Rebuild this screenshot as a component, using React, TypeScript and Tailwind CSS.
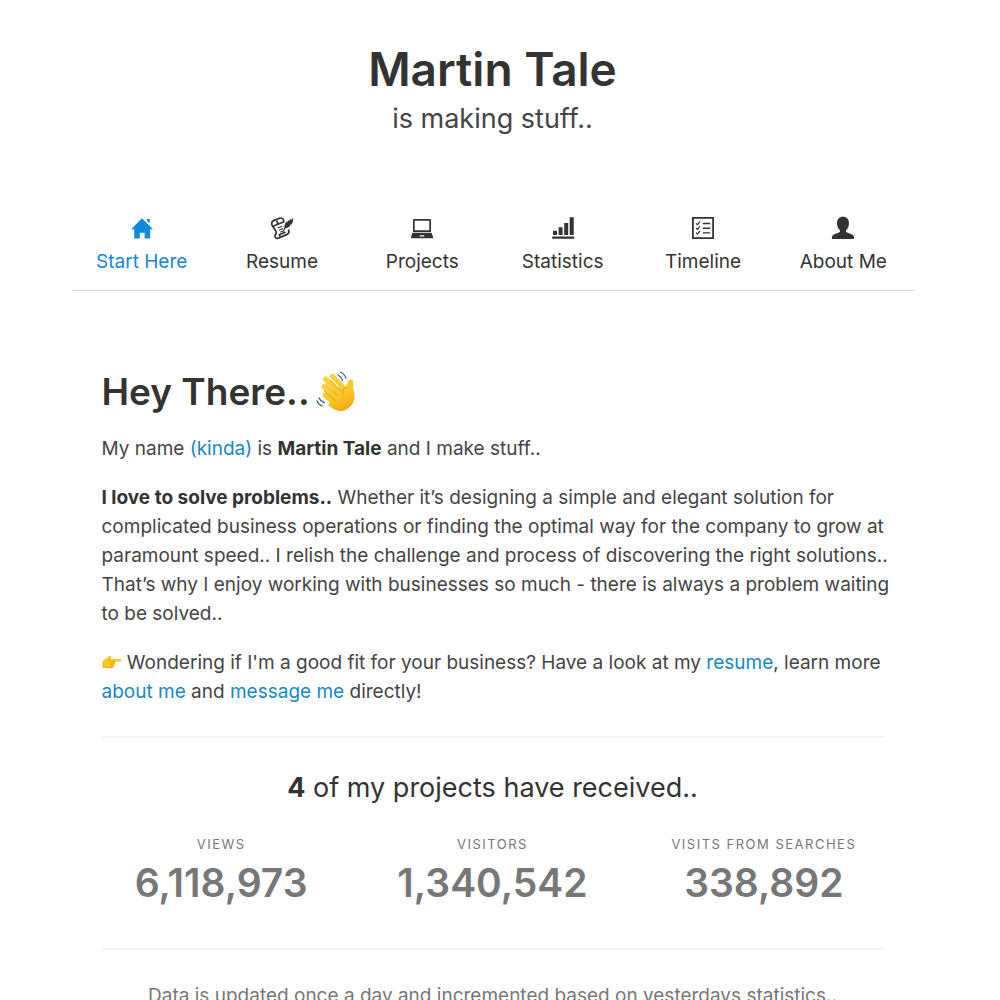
import React from "react";

const HomeIcon = () => (
  <svg viewBox="0 0 24 24" className="h-6 w-6 text-[#0f8ae0]" fill="currentColor" aria-hidden="true">
    <path d="M12 2.200 1.200 13.200h3v9.300h5.600v-5.800h4.800v5.800h5.600v-9.300h2.800z" />
    <path d="M17 3.100h2.700v4.200L17 5z" />
  </svg>
);

const ResumeIcon = () => (
  <svg
    viewBox="0 0 24 24"
    className="h-6 w-6"
    fill="none"
    stroke="currentColor"
    strokeWidth="1.700"
    strokeLinecap="round"
    strokeLinejoin="round"
    aria-hidden="true"
  >
    <path d="M13.800 5.800c0-2.800-1.900-4.400-4.300-3.600L3.900 4.400C1.500 5.400 1.100 7.700 2.400 9.800l3.400 5.200c.9 1.600.4 2.600-.4 3.700" />
    <path d="M2.800 10.300 6.600 8.800c1.300-.6 1.300-2.500.2-3.700M6.600 8.800l6.200-2.500" />
    <path d="M5.400 18.700c-1.300 2 .5 4.300 2.900 3.500l8.700-3.800c1.800-.9 2.400-2.400 1.600-4.300M8.900 22c1.300-.8 1.300-2.100.4-3.300l5.700-2.400" />
    <path d="m8 11.800 3.500-1.400M9.400 14.100l3.200-1.300M10.700 16.100l3.300-1.300" strokeWidth="1.100" />
    <path d="m13.500 14.200 2.300-3.300" strokeWidth="1.100" />
    <path
      d="M14.500 12.300c-.3-3 .6-5.200 2.300-6.800l.5 1 .8-2.200 1 .7 1.200-2.100.8.8 2.300-2-.6 3.100.4.700-1.300 1.500.3 1-2 .7.200 1.100c-1.400 1.500-3.200 2.400-5.900 2.500z"
      fill="currentColor"
      stroke="none"
    />
  </svg>
);

const LaptopIcon = () => (
  <svg viewBox="0 0 24 24" className="h-6 w-6" fill="currentColor" aria-hidden="true">
    <path
      fillRule="evenodd"
      d="M4 3h16a1 1 0 0 1 1 1v12H3V4a1 1 0 0 1 1-1zm.7 1.700v9.600h14.600V4.700z"
    />
    <path fillRule="evenodd" d="M2.500 16.700h19l1.500 4v1.500H1v-1.500zm7.500 2.600-.5 1.200h5l-.5-1.200z" />
  </svg>
);

const StatisticsIcon = () => (
  <svg viewBox="0 0 24 24" className="h-6 w-6" fill="currentColor" aria-hidden="true">
    <path d="M2 14.800h4v4.200H2zM7.600 11.300h4V19h-4zM13.200 7h4v12h-4zM18.700 1.300h4V19h-4zM1.200 20.500h22v2.200h-22z" />
  </svg>
);

const TimelineIcon = () => (
  <svg
    viewBox="0 0 24 24"
    className="h-6 w-6"
    fill="none"
    stroke="currentColor"
    strokeWidth="1.2"
    aria-hidden="true"
  >
    <path d="M1.900 1.900h20.200v20.200H1.900z" strokeWidth="1.800" />
    <path d="m5 7.300 1.400 1.400L9 5.600M5 12l1.400 1.400L9 10.300M5 16.700l1.400 1.400L9 15" />
    <path d="M11.800 7.500h7.400M11.800 12.200h7.400M11.800 16.900h7.400" strokeWidth="1.400" />
  </svg>
);

const AboutIcon = () => (
  <svg viewBox="0 0 24 24" className="h-6 w-6" fill="currentColor" aria-hidden="true">
    <path d="M12 .7c3.700 0 6 2.600 6 6.200 0 3-1.200 5.800-2.900 7.400v1.700c1.200.9 3 1.300 4.900 1.900 2.300.7 3.100 1.800 3.200 5H.8c.1-3.200.9-4.300 3.200-5 1.900-.6 3.700-1 4.900-1.900v-1.700C7.200 12.700 6 9.900 6 6.900 6 3.300 8.300.700 12 .700z" />
  </svg>
);

const WavingHand = () => (
  <svg viewBox="0 0 42 42" className="h-[42px] w-[42px]" fill="none" role="img" aria-label="Waving hand">
    <defs>
      <linearGradient id="wave" x1="12" y1="4" x2="30" y2="39" gradientUnits="userSpaceOnUse">
        <stop stopColor="#ffd43a" />
        <stop offset="0.6" stopColor="#fdc727" />
        <stop offset="1" stopColor="#f2a615" />
      </linearGradient>
    </defs>
    <g stroke="url(#wave)" strokeLinecap="round">
      <path d="m16.500 5.200 12 13" strokeWidth="5" />
      <path d="m9.700 8.200 14 14" strokeWidth="5.400" />
      <path d="m8 15.800 14 13" strokeWidth="5.200" />
      <path d="m8.800 24.200 11 9" strokeWidth="4.800" />
    </g>
    <path
      d="m18 17 10.700-.5c2-1.400 2.600-3.700 3.200-5.800.7-2.100 2.600-2.900 4.200-1.800 1.400 1 1.300 2.400 1.100 4-.5 3.800.9 6.600 1.200 10.800.4 5.600-1.700 10.300-6 13.500-5.300 3.900-11.400 3.700-16.300-.1l-3.800-2.900z"
      fill="url(#wave)"
    />
    <path
      d="m14.300 9.400 10 10M9.700 13.300l11.500 11M8.300 20.200l11 9.400M29.800 16.200c-2.800 1.500-3.800 4.300-2.900 7.400"
      stroke="#dc9618"
      strokeWidth="1"
      strokeLinecap="round"
    />
    <path
      d="M24.500 1.200c2.500 1 4.500 3.200 5.600 6M22 4c2.100 1 3.700 2.900 4.500 5.500M3 26.800c1 2.400 2.800 4 5.500 4.800M1 29.800c.9 2.500 2.700 4.400 5.200 5.200"
      stroke="#4b5c67"
      strokeWidth="1.200"
      strokeLinecap="round"
    />
  </svg>
);

const PointingHand = () => (
  <svg
    viewBox="0 0 20 14"
    className="inline-block h-3.5 w-5 align-baseline"
    role="img"
    aria-label="Pointing right"
  >
    <path
      d="M.3 6.300C2.800 4.800 5 2 7.600 1.100c1.300-.4 2.300.5 1.600 1.700l-.7 1.200H18c1.900 0 1.900 2.400 0 2.500l-5.300.3c.7.8.5 1.700-.2 2.200.5.800.2 1.700-.6 2 .2 1-.5 1.700-1.500 1.800-3 .2-6 .1-10.100-.9z"
      fill="#fcc823"
    />
    <path
      d="M8.300 4.200 7 6.500M8.800 6.900h3.900M8.700 9.100h3.800M8.600 11.100h3.300M.4 11.800c4 1 7 1.100 10 .9"
      fill="none"
      stroke="#df9a16"
      strokeWidth=".8"
    />
  </svg>
);

const links = [
  { to: "#start", label: "Start Here", icon: HomeIcon, active: true },
  { to: "#resume", label: "Resume", icon: ResumeIcon },
  { to: "#projects", label: "Projects", icon: LaptopIcon },
  { to: "#statistics", label: "Statistics", icon: StatisticsIcon },
  { to: "#timeline", label: "Timeline", icon: TimelineIcon },
  { to: "#about", label: "About Me", icon: AboutIcon },
];

const stats = [
  { label: "Views", value: "6,118,973" },
  { label: "Visitors", value: "1,340,542" },
  { label: "Visits from searches", value: "338,892" },
];

const TextLink = ({ to, children }: { to: string; children: React.ReactNode }) => (
  <a href={to} className="text-[#1688c9] hover:underline">
    {children}
  </a>
);

const Navigation = () => (
  <nav className="mt-[76px] grid grid-cols-6 border-b border-[#d4d4d4] pb-3.5">
    {links.map(({ to, label, icon: Icon, active }) => (
      <a
        key={to}
        href={to}
        aria-current={active ? "page" : undefined}
        className={
          active
            ? "flex flex-col items-center gap-[7px] text-[#1688d3]"
            : "flex flex-col items-center gap-[7px] text-[#333] hover:text-[#1688d3]"
        }
      >
        <Icon />
        {label}
      </a>
    ))}
  </nav>
);

const Stats = () => (
  <section className="border-y-2 border-[#f3f3f3] pt-8 pb-10">
    <h3 className="text-center text-[27px] leading-9 text-[#333]">
      <strong className="font-bold">4</strong> of my projects have received..
    </h3>
    <dl className="-mx-4 mt-7 grid grid-cols-3 text-center text-[#777]">
      {stats.map(({ label, value }) => (
        <div key={label}>
          <dt className="text-[13px] leading-5 tracking-[1.5px] uppercase">{label}</dt>
          <dd className="mt-1 text-[39px] leading-[50px] font-semibold">{value}</dd>
        </div>
      ))}
    </dl>
  </section>
);

export default function App() {
  return (
    <div className="min-h-screen bg-white pr-[15px] font-['Inter',sans-serif] text-[19px] leading-[29px] text-[#444]">
      <div className="mx-auto w-full max-w-[842px] pt-10">
        <header className="text-center">
          <h1 className="text-[46px] leading-[58px] font-semibold text-[#333]">Martin Tale</h1>
          <p className="text-[27px] leading-[42px]">is making stuff..</p>
        </header>

        <Navigation />

        <main className="px-[30px] pt-20">
          <h2 className="flex items-center gap-1.5 text-[37px] leading-[42px] font-semibold text-[#333]">
            Hey There.. <WavingHand />
          </h2>
          <div className="-mr-3 mt-[21px] mb-[30px] space-y-5">
            <p>
              My name <TextLink to="#kinda">(kinda)</TextLink> is{" "}
              <strong className="font-bold text-[#333]">Martin Tale</strong> and I make stuff..
            </p>
            <p>
              <strong className="font-bold text-[#333]">I love to solve problems..</strong>{" "}
              Whether it’s designing a simple and elegant solution for
              <br />
              complicated business operations or finding the optimal way for the company to grow at
              <br />
              paramount speed.. I relish the challenge and process of discovering the right solutions..
              <br />
              That’s why I enjoy working with businesses so much - there is always a problem waiting
              <br />
              to be solved..
            </p>
            <p>
              <PointingHand /> Wondering if I'm a good fit for your business? Have a look at my{" "}
              <TextLink to="#resume">resume</TextLink>, learn more
              <br />
              <TextLink to="#about">about me</TextLink> and{" "}
              <TextLink to="#message">message me</TextLink> directly!
            </p>
          </div>

          <Stats />

          <p className="mt-[31px] text-center text-[#777]">
            Data is updated once a day and incremented based on yesterdays statistics..
          </p>
        </main>
      </div>
    </div>
  );
}
